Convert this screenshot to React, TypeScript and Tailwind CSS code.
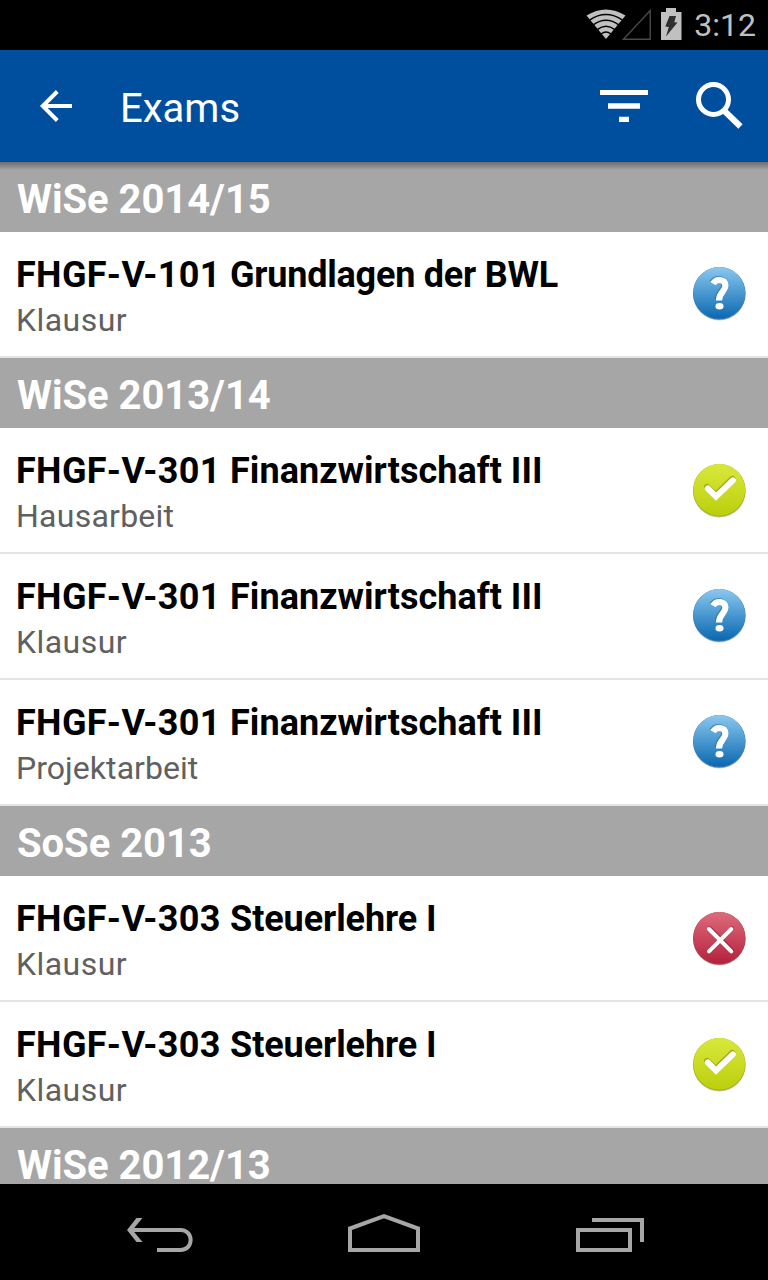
type ExamStatus = "open" | "passed" | "failed";

type Exam = {
  code: string;
  id: number;
  kind: string;
  name: string;
  status: ExamStatus;
};

type Semester = {
  exams: Exam[];
  name: string;
};

const semesters: Semester[] = [
  {
    name: "WiSe 2014/15",
    exams: [
      { id: 1, code: "FHGF-V-101", name: "Grundlagen der BWL", kind: "Klausur", status: "open" },
    ],
  },
  {
    name: "WiSe 2013/14",
    exams: [
      { id: 2, code: "FHGF-V-301", name: "Finanzwirtschaft III", kind: "Hausarbeit", status: "passed" },
      { id: 3, code: "FHGF-V-301", name: "Finanzwirtschaft III", kind: "Klausur", status: "open" },
      { id: 4, code: "FHGF-V-301", name: "Finanzwirtschaft III", kind: "Projektarbeit", status: "open" },
    ],
  },
  {
    name: "SoSe 2013",
    exams: [
      { id: 5, code: "FHGF-V-303", name: "Steuerlehre I", kind: "Klausur", status: "failed" },
      { id: 6, code: "FHGF-V-303", name: "Steuerlehre I", kind: "Klausur", status: "passed" },
    ],
  },
  { name: "WiSe 2012/13", exams: [] },
];

const badgeColors: Record<ExamStatus, { bottom: string; rim: string; top: string }> = {
  open: { top: "#8ac8f0", bottom: "#0a68b0", rim: "#3f7eae" },
  passed: { top: "#d8e83c", bottom: "#bccf0c", rim: "#a3b321" },
  failed: { top: "#dd6c7b", bottom: "#b5213d", rim: "#9d4352" },
};

function getNameClass(name: string) {
  if (name.startsWith("Grundlagen")) {
    return "tracking-[-0.23px]";
  }

  if (name.startsWith("Steuerlehre")) {
    return "tracking-[-0.08px]";
  }

  return "tracking-[0.04px]";
}

function getKindClass(kind: string) {
  if (kind === "Klausur") {
    return "tracking-[0.45px]";
  }

  if (kind === "Hausarbeit") {
    return "tracking-[0.25px]";
  }

  return "tracking-[0.05px]";
}

function StatusBadge({ id, status }: { id: number; status: ExamStatus }) {
  const colors = badgeColors[status];
  const gradientId = `badge-${id}`;
  const questionPath = "M24 20.6C27 15.6 36.4 15.4 36.4 22.6C36.4 28.4 30 28.8 30 37.6";

  return (
    <svg
      className={status === "open" ? "mb-[3px]" : ""}
      width="60"
      height="60"
      viewBox="0 0 60 60"
      role="img"
      aria-label={status}
    >
      <defs>
        <linearGradient id={gradientId} x1="0" y1="0" x2="0" y2="1">
          <stop offset="0" stopColor={colors.top} />
          <stop offset="1" stopColor={colors.bottom} />
        </linearGradient>
      </defs>
      <circle cx="30.3" cy="31.2" r="26.2" fill="#000" opacity="0.2" />
      <circle cx="30.3" cy="30.4" r="26.3" fill={colors.rim} />
      <circle cx="30.3" cy="29.8" r="25.8" fill={`url(#${gradientId})`} />
      {status === "open" && (
        <g fill="none" strokeWidth="6.2">
          <path d={questionPath} stroke="#0b4a80" opacity="0.4" transform="translate(-0.9 -1)" />
          <path d={questionPath} stroke="#fff" />
          <ellipse cx="30.5" cy="43.2" rx="4" ry="3.2" fill="#fff" />
        </g>
      )}
      {status === "passed" && (
        <g fill="none" strokeWidth="6" strokeLinecap="round">
          <path d="M18.4 27.8L27 36L43.6 19.8" stroke="#7c8a00" opacity="0.6" transform="translate(-0.3 -0.9)" />
          <path d="M18.8 28.4L27 36.6L43.8 20.4" stroke="#fff" />
        </g>
      )}
      {status === "failed" && (
        <g fill="none" strokeWidth="4" strokeLinecap="round">
          <path d="M20 21L42.3 43.3M42.3 21L20 43.3" stroke="#6d1425" opacity="0.45" transform="translate(0.8 -0.8)" />
          <path d="M20 21L42.3 43.3M42.3 21L20 43.3" stroke="#fff" />
        </g>
      )}
    </svg>
  );
}

function StatusBar() {
  return (
    <div className="flex h-[50px] shrink-0 items-center justify-end bg-black pr-3 text-[#c0c0c0]">
      <svg width="98" height="50" viewBox="0 0 98 50" aria-hidden="true">
        <path d="M0.5 15.5Q20 3.5 39.5 15.5L20 39Z" fill="#c0c0c0" />
        <g fill="none" stroke="#000" strokeWidth="1.5">
          <path d="M3.5 20.2Q20 9 36.5 20.2" />
          <path d="M7.2 24.8Q20 15.7 32.8 24.8" />
          <path d="M11.2 29.6Q20 22.8 28.8 29.6" />
          <path d="M15 34Q20 30 25 34" />
        </g>
        <path d="M37.5 39.2H64.2V10.5Z" fill="none" stroke="#4a4a4a" strokeWidth="1.4" />
        <path d="M80 8H90V12H95.5V40H75V12H80Z" fill="#c0c0c0" />
        <path d="M83.5 16L90 16L88.3 22.2L91.5 22.6L80 36.5L82.8 27L79.3 26.5Z" fill="#2f2f2f" />
      </svg>
      <span className="ml-2.5 text-[32px] leading-[50px]">3:12</span>
    </div>
  );
}

function ActionBar() {
  return (
    <header className="relative flex h-28 shrink-0 items-center bg-[#004f9e] px-6 text-white">
      <button type="button" aria-label="Back">
        <svg className="block" width="64" height="64" viewBox="0 0 64 64" fill="none" stroke="#fff" strokeWidth="4">
          <path d="M48 32H19M33.3 17.5L18.8 32L33.3 46.5" />
        </svg>
      </button>
      <h1 className="ml-8 flex-1 pt-1.5 text-[40px] leading-12">Exams</h1>
      <button type="button" aria-label="Filter">
        <svg className="block" width="48" height="64" viewBox="0 0 48 64" fill="#fff">
          <path d="M0 16H48V21H0ZM8 29.3H40V34.7H8ZM19 42.7H29V48H19Z" />
        </svg>
      </button>
      <button type="button" className="ml-12" aria-label="Search">
        <svg className="block" width="48" height="64" viewBox="0 0 48 64" fill="none" stroke="#fff">
          <circle cx="17.5" cy="25.5" r="15" strokeWidth="5" />
          <path d="M29 37.5L44.5 52.5" strokeWidth="6" />
        </svg>
      </button>
      <div className="absolute inset-x-0 top-full h-2 bg-linear-to-b from-black/35 to-transparent" />
    </header>
  );
}

function ExamRow({ exam }: { exam: Exam }) {
  return (
    <li className="flex h-[126px] items-center justify-between border-b-2 border-[#e3e3e3] bg-white pr-[19px] pl-4">
      <div className="pt-[5px]">
        <p className="text-[36px] leading-[42px] font-bold text-black">
          <span className="tracking-[0.35px]">{exam.code} </span>
          <span className={getNameClass(exam.name)}>{exam.name}</span>
        </p>
        <p className={`mt-[5px] text-[32px] leading-[38px] text-[#606060] ${getKindClass(exam.kind)}`}>
          {exam.kind}
        </p>
      </div>
      <StatusBadge id={exam.id} status={exam.status} />
    </li>
  );
}

function NavigationBar() {
  return (
    <nav className="flex h-24 shrink-0 items-center justify-between bg-black px-[123px]">
      <button type="button" aria-label="Back">
        <svg className="block" width="74" height="96" viewBox="0 0 74 96" fill="none" stroke="#a6a6a6" strokeWidth="4">
          <path d="M6 46H57.5C71 46 71 66 57.5 66H34" />
          <path d="M19.5 34H13.5L4 46L13.5 58H19.5L9.5 46Z" fill="#a6a6a6" stroke="none" />
        </svg>
      </button>
      <button type="button" aria-label="Home">
        <svg className="block" width="74" height="96" viewBox="0 0 74 96" fill="none" stroke="#a6a6a6" strokeWidth="4">
          <path d="M3 66V44.5L37 32.2L71 44.5V66Z" />
        </svg>
      </button>
      <button type="button" aria-label="Recent apps">
        <svg className="block" width="74" height="96" viewBox="0 0 74 96" fill="none" stroke="#a6a6a6" strokeWidth="4">
          <path d="M7 46H59V66H7ZM21 36H71V58" />
        </svg>
      </button>
    </nav>
  );
}

export default function App() {
  return (
    <div className="flex h-[1280px] w-[768px] flex-col overflow-hidden bg-white font-[Roboto,sans-serif]">
      <StatusBar />
      <ActionBar />
      <main className="min-h-0 flex-1 overflow-hidden">
        {semesters.map((semester) => (
          <section key={semester.name}>
            <h2 className="h-[70px] bg-[#a6a6a6] pt-[5px] pl-[17px] text-[40px] leading-[66px] font-bold tracking-[-0.05px] text-white">
              {semester.name}
            </h2>
            <ul>
              {semester.exams.map((exam) => (
                <ExamRow key={exam.id} exam={exam} />
              ))}
            </ul>
          </section>
        ))}
      </main>
      <NavigationBar />
    </div>
  );
}
